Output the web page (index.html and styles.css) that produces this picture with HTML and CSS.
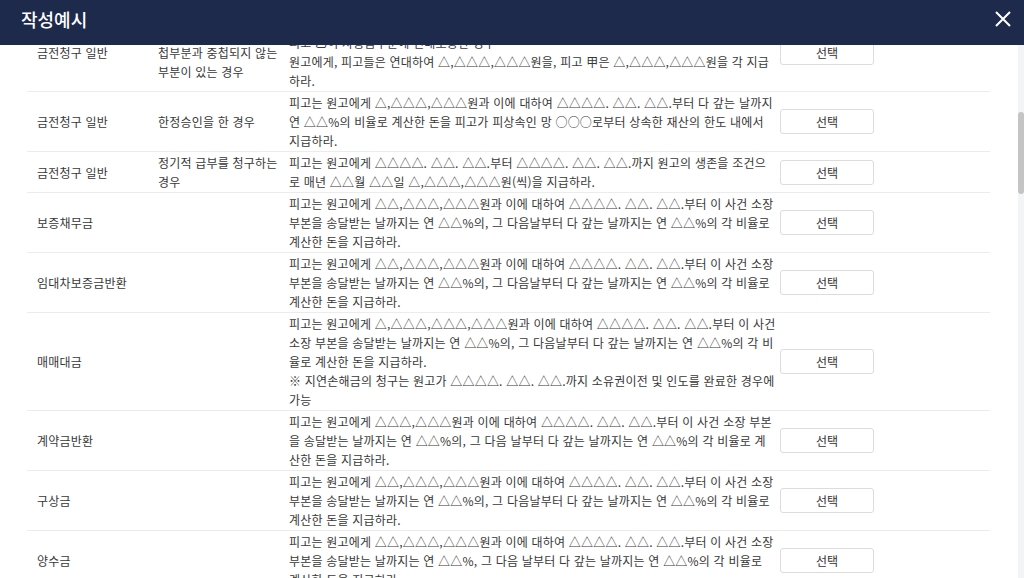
FILE: index.html
```html
<!DOCTYPE html>
<html lang="ko">
<head>
<meta charset="utf-8">
<title>작성예시</title>
<link rel="stylesheet" href="styles.css">
</head>
<body>
<div class="modal">
  <header class="modal-head">
    <h2 class="modal-title">작성예시</h2>
    <button class="close-btn" type="button" aria-label="닫기">
      <svg width="18" height="18" viewBox="0 0 18 18"><path d="M2 2 L16 16 M16 2 L2 16" stroke="#fff" stroke-width="2" fill="none"/></svg>
    </button>
  </header>
  <div class="modal-body">
    <table class="ex-table">
      <colgroup><col class="c1"><col class="c2"><col class="c3"><col class="c4"></colgroup>
      <tbody>
        <tr>
          <td>금전청구 일반</td>
          <td>주채무와 보증채무 중<br>첩부분과 중첩되지 않는 부분이 있는 경우</td>
          <td>피고들은 연대하여 원고에게 △,△△△,△△△원을 지급하라.<br>피고 乙이 차용금부분에 연대보증한 경우<br>원고에게, 피고들은 연대하여 △,△△△,△△△원을, 피고 甲은 △,△△△,△△△원을 각 지급하라.</td>
          <td><button class="sel-btn" type="button">선택</button></td>
        </tr>
        <tr>
          <td>금전청구 일반</td>
          <td>한정승인을 한 경우</td>
          <td>피고는 원고에게 △,△△△,△△△원과 이에 대하여 △△△△. △△. △△.부터 다 갚는 날까지 연 △△%의 비율로 계산한 돈을 피고가 피상속인 망 ○○○로부터 상속한 재산의 한도 내에서 지급하라.</td>
          <td><button class="sel-btn" type="button">선택</button></td>
        </tr>
        <tr>
          <td>금전청구 일반</td>
          <td>정기적 급부를 청구하는 경우</td>
          <td>피고는 원고에게 △△△△. △△. △△.부터 △△△△. △△. △△.까지 원고의 생존을 조건으로 매년 △△월 △△일 △,△△△,△△△원(씩)을 지급하라.</td>
          <td><button class="sel-btn" type="button">선택</button></td>
        </tr>
        <tr>
          <td>보증채무금</td>
          <td></td>
          <td>피고는 원고에게 △△,△△△,△△△원과 이에 대하여 △△△△. △△. △△.부터 이 사건 소장 부본을 송달받는 날까지는 연 △△%의, 그 다음날부터 다 갚는 날까지는 연 △△%의 각 비율로 계산한 돈을 지급하라.</td>
          <td><button class="sel-btn" type="button">선택</button></td>
        </tr>
        <tr>
          <td>임대차보증금반환</td>
          <td></td>
          <td>피고는 원고에게 △△,△△△,△△△원과 이에 대하여 △△△△. △△. △△.부터 이 사건 소장 부본을 송달받는 날까지는 연 △△%의, 그 다음날부터 다 갚는 날까지는 연 △△%의 각 비율로 계산한 돈을 지급하라.</td>
          <td><button class="sel-btn" type="button">선택</button></td>
        </tr>
        <tr>
          <td>매매대금</td>
          <td></td>
          <td>피고는 원고에게 △,△△△,△△△,△△△원과 이에 대하여 △△△△. △△. △△.부터 이 사건 소장 부본을 송달받는 날까지는 연 △△%의, 그 다음날부터 다 갚는 날까지는 연 △△%의 각 비율로 계산한 돈을 지급하라.<br>※ 지연손해금의 청구는 원고가 △△△△. △△. △△.까지 소유권이전 및 인도를 완료한 경우에 가능</td>
          <td><button class="sel-btn" type="button">선택</button></td>
        </tr>
        <tr>
          <td>계약금반환</td>
          <td></td>
          <td>피고는 원고에게 △△△,△△△원과 이에 대하여 △△△△. △△. △△.부터 이 사건 소장 부본을 송달받는 날까지는 연 △△%의, 그 다음 날부터 다 갚는 날까지는 연 △△%의 각 비율로 계산한 돈을 지급하라.</td>
          <td><button class="sel-btn" type="button">선택</button></td>
        </tr>
        <tr>
          <td>구상금</td>
          <td></td>
          <td>피고는 원고에게 △△,△△△,△△△원과 이에 대하여 △△△△. △△. △△.부터 이 사건 소장 부본을 송달받는 날까지는 연 △△%의, 그 다음날부터 다 갚는 날까지는 연 △△%의 각 비율로 계산한 돈을 지급하라.</td>
          <td><button class="sel-btn" type="button">선택</button></td>
        </tr>
        <tr>
          <td>양수금</td>
          <td></td>
          <td>피고는 원고에게 △△,△△△,△△△원과 이에 대하여 △△△△. △△. △△.부터 이 사건 소장 부본을 송달받는 날까지는 연 △△%, 그 다음 날부터 다 갚는 날까지는 연 △△%의 각 비율로 계산한 돈을 지급하라.</td>
          <td><button class="sel-btn" type="button">선택</button></td>
        </tr>
      </tbody>
    </table>
  </div>
  <div class="scrollbar"><div class="scroll-thumb"></div></div>
</div>
</body>
</html>
```

FILE: styles.css
```css
html, body {
  margin: 0;
  padding: 0;
  height: 578px;
  overflow: hidden;
  background: #fff;
}
body {
  font-family: "Noto Sans CJK KR", "Noto Sans", sans-serif;
  color: #383838;
}
.modal {
  position: relative;
  height: 578px;
  display: flex;
  flex-direction: column;
}
.modal-head {
  flex: 0 0 45px;
  height: 45px;
  box-sizing: border-box;
  background: #1e2a4b;
  display: flex;
  align-items: center;
  justify-content: space-between;
  padding: 0 12px 8px 21px;
  position: relative;
  z-index: 2;
}
.modal-title {
  margin: 0;
  color: #fff;
  font-size: 18px;
  font-weight: 500;
  line-height: 1;
}
.close-btn {
  background: none;
  border: 0;
  padding: 0;
  width: 18px;
  height: 18px;
  display: flex;
  cursor: pointer;
}
.modal-body {
  flex: 1 1 auto;
  overflow: hidden;
  padding: 0 34px 0 27px;
}
.ex-table {
  width: 963px;
  border-collapse: collapse;
  table-layout: fixed;
  margin-top: -32px;
  font-size: 12px;
  line-height: 19px;
  letter-spacing: 0.2px;
}
.c1 { width: 121px; }
.c2 { width: 131px; }
.c3 { width: 497px; }
.c4 { width: 214px; }
.ex-table td {
  border-bottom: 1px solid #ececec;
  padding: 1px 0 1px 10px;
  vertical-align: middle;
  word-break: break-all;
}
.ex-table td:last-child {
  padding-left: 4px;
}
.sel-btn {
  width: 94px;
  height: 25px;
  background: #fff;
  border: 1px solid #dcdcdc;
  border-radius: 3px;
  font-family: inherit;
  font-size: 12px;
  color: #333;
  padding: 0;
}
.scrollbar {
  position: absolute;
  right: 0;
  top: 45px;
  bottom: 0;
  width: 6px;
  background: #f3f4f6;
}
.scroll-thumb {
  margin-top: 67px;
  height: 82px;
  background: #c4c4c4;
  border-radius: 3px;
}
```
